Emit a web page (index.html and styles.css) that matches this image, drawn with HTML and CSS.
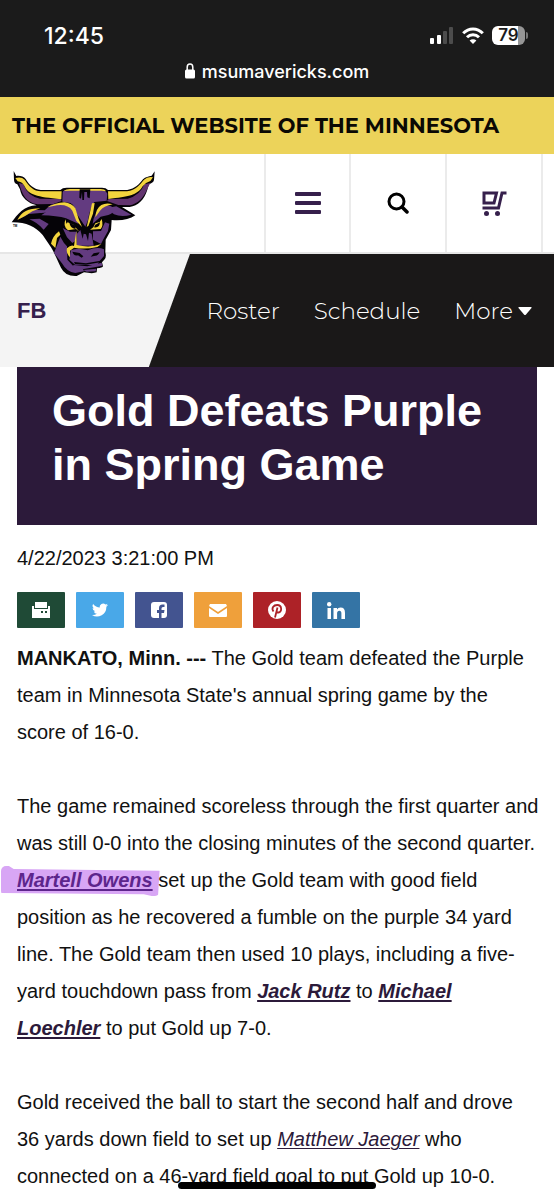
FILE: index.html
```html
<!DOCTYPE html>
<html lang="en">
<head>
    <meta charset="UTF-8">
    <meta name="viewport" content="width=device-width, initial-scale=1.0">
    <title>Gold Defeats Purple in Spring Game</title>
    <link rel="stylesheet" href="styles.css">
</head>
<body>

<!-- Phone status bar and address -->
<div class="browser-bar">
    <div class="status">
        <span class="clock">12:45</span>
        <div class="status-icons">
            <svg width="24" height="18" viewBox="0 0 24 18">
                <rect x="0" y="11" width="4" height="6" rx="1" fill="#fff"/>
                <rect x="7" y="8" width="4" height="9" rx="1" fill="#fff"/>
                <rect x="13" y="4" width="4" height="13" rx="1" fill="#4c4c4c"/>
                <rect x="19" y="0" width="4" height="17" rx="1" fill="#4c4c4c"/>
            </svg>
            <svg width="22" height="18" viewBox="0 0 22 18" fill="none" stroke="#fff" stroke-width="3">
                <path d="M1.2 6.3C6.8.5 15.2.5 20.8 6.3"/>
                <path d="M5 10.2c3.4-3.4 8.600-3.400 12 0"/>
                <path d="M11 17l-3.400-3.600c1.900-1.700 4.900-1.700 6.800 0z" fill="#fff" stroke="none"/>
            </svg>
            <div class="battery"><span>79</span></div>
        </div>
    </div>
    <div class="address">
        <svg width="10" height="16" viewBox="0 0 10 16">
            <path d="M2.200 8V4.200a2.800 3.200 0 0 1 5.600 0V8" fill="none" stroke="#fff" stroke-width="1.500"/>
            <rect x="0" y="6.500" width="10" height="9" rx="1.500" fill="#fff"/>
        </svg>
        <span>msumavericks.com</span>
    </div>
</div>

<div class="banner">THE OFFICIAL WEBSITE OF THE MINNESOTA</div>

<header class="site-header">
    <a class="logo" href="#" aria-label="Minnesota State Mavericks">
        <svg viewBox="30 45 441 321">
            <!-- outline -->
            <path fill="#050307" d="M41 48L49 63C58 61 71 64 77 72C87 89 100 102 122 105L181 105Q187 98 200 98L306 98Q318 98 324 105L382 105C405 101 418 88 429 73C437 65 445 65 455 62L464 49L462 75Q460 84 446 88L442 104C432 136 414 151 389 156L366 156L406 181C388 193 364 198 335 195L333 225L317 254L316 292Q320 305 314 313L306 322L309 334Q308 339 291 340L290 352Q279 357 252 352L230 363Q196 365 183 338C174 321 168 303 153 277L128 240C106 214 76 201 35 202C51 180 72 151 110 151C85 145 64 129 60 103L52 88Q43 86 42 75Z"/>
            <!-- horns -->
            <path fill="#62346f" d="M57 84C66 117 77 143 113 148L160 147L185 138L181 132L120 131Q83 124 70 88Z"/>
            <path fill="#62346f" d="M451 84C436 111 430 141 390 151L355 150L321 138L326 132L383 131Q420 122 433 88Z"/>
            <path fill="#f3d43d" d="M46 69L53 79Q66 81 72 91C87 122 109 125 184 133L185 109L123 109C101 108 88 95 74 74Q64 64 46 69Z"/>
            <path fill="#f3d43d" d="M459 67L451 78Q437 82 428 94C411 122 386 125 325 132L324 109L381 109C407 106 420 88 432 74Q443 64 459 67Z"/>
            <!-- forehead -->
            <path fill="#633b80" d="M188 112Q190 105 202 105L301 105Q318 106 322 116L320 137L283 141Q270 156 264 195L256 215L229 175Q225 151 211 144L187 140Z"/>
            <path fill="#f3d43d" d="M191 108Q198 102 210 102L302 102Q314 102 319 109L304 107L209 107Z"/>
            <path fill="#050307" d="M239 103L271 103L269 130L262 127L261 111L253 111L252 135L247 135L246 111L243 131L238 128Z"/>
            <!-- ears -->
            <path fill="#633b80" d="M59 192C76 167 91 162 111 165L134 166L153 149L199 143C173 158 151 175 121 174L86 177L57 193Z"/>
            <path fill="#f3d43d" d="M52 195C66 170 83 160 121 160L97 169L75 183Z"/>
            <path fill="#633b80" d="M88 193L119 191L146 207L131 224Q110 201 88 193Z"/>
            <path fill="#633b80" d="M341 155L349 154L394 179Q365 187 342 178L318 159Z"/>
            <!-- brow -->
            <path fill="#633b80" d="M124 181Q166 150 195 148Q216 151 225 166L235 206L198 190Q172 182 124 181Z"/>
            <path fill="#633b80" d="M278 206Q281 178 300 160Q320 146 337 156Q346 174 325 180L302 185Z"/>
            <path fill="#f3d43d" d="M142 157Q166 143 193 142Q216 145 226 160L236 192L246 216L229 198L217 167Q203 147 171 151Z"/>
            <path fill="#f3d43d" d="M276 145L284 144L279 176L266 211L260 217L269 176Z"/>
            <path fill="#f3d43d" d="M286 187Q287 161 304 150Q319 142 338 148Q313 152 300 167Z"/>
            <!-- cheek -->
            <path fill="#633b80" d="M162 294L181 245L192 264L201 274L202 314L219 332L248 340L252 349L226 354Q199 349 187 326Z"/>
            <path fill="#f3d43d" d="M153 266Q158 243 177 229L181 239L171 249L166 279Z"/>
            <!-- eyes -->
            <path fill="#f3d43d" d="M197 193Q187 213 204 226L228 222L238 230L220 209L203 202L199 206Z"/>
            <path fill="#050307" d="M208 202L228 214L226 222Q210 220 208 202Z"/>
            <path fill="#f3d43d" d="M305 192Q311 213 302 222L270 224L280 217L286 205L299 201Z"/>
            <path fill="#050307" d="M286 209L300 202Q300 219 282 217Z"/>
            <path fill="#633b80" d="M188 219L210 230L230 230L229 256L217 264L201 247Z"/>
            <path fill="#633b80" d="M315 202L328 206L324 228L310 253L303 267L279 254L279 229L303 228Z"/>
            <!-- muzzle -->
            <path fill="#633b80" d="M231 236L241 225L248 251L251 236L258 238L264 258L267 233L275 236L281 272L229 272Z"/>
            <path fill="#f3d43d" d="M229 227L230 270Q271 280 304 267L292 276Q256 284 222 278L210 287L211 308Q197 295 201 280Q213 268 222 273Z"/>
            <path fill="#633b80" d="M213 286Q232 277 263 286Q292 274 312 283L312 303L299 318L291 331L225 329L208 314Z"/>
            <path fill="#050307" d="M217 290L239 294L250 304L245 308L234 301Q222 304 217 290ZM272 305L281 295L299 292Q295 303 282 303ZM222 321L258 325L302 317L304 321L258 329L225 327Z"/>
            <path fill="#633b80" d="M220 330L262 334L305 323L307 332L283 337L251 342L219 338ZM249 345L289 341L287 349L260 350Z"/>
            <text x="39" y="215" class="tm">TM</text>
        </svg>
    </a>
    <button class="header-btn menu-btn" aria-label="Menu">
        <svg width="26" height="22" viewBox="0 0 26 22" fill="#36204c">
            <rect width="26" height="4" rx="1"/>
            <rect y="9" width="26" height="4" rx="1"/>
            <rect y="18" width="26" height="4" rx="1"/>
        </svg>
    </button>
    <button class="header-btn" aria-label="Search">
        <svg width="22" height="22" viewBox="0 0 22 22" fill="none" stroke="#000" stroke-width="3">
            <circle cx="9.500" cy="9.500" r="7.500"/>
            <path d="M15 15l5 5" stroke-width="3.500" stroke-linecap="round"/>
        </svg>
    </button>
    <button class="header-btn" aria-label="Cart">
        <svg width="25" height="25" viewBox="0 0 25 25" fill="none" stroke="#36204c" stroke-width="3">
            <path d="M2 2h12.500l-2.500 10H2zM24.500 2h-4.500l-3.500 15H.5"/>
            <g fill="#36204c" stroke="none"><circle cx="4.500" cy="22.500" r="2.500"/><circle cx="15.500" cy="22.500" r="2.500"/></g>
        </svg>
    </button>
</header>

<nav class="sport-nav">
    <a class="sport" href="#">FB</a>
    <div class="sport-links">
        <a href="#">Roster</a>
        <a href="#">Schedule</a>
        <a class="more" href="#">More
            <svg width="14" height="8" viewBox="0 0 14 8"><path d="M1 0h12q1 0 .5 1L8 7.500q-1 1-2 0L.5 1Q0 0 1 0z" fill="#fff"/></svg>
        </a>
    </div>
</nav>

<main class="story">
    <h1>Gold Defeats Purple in Spring Game</h1>
    <time class="date" datetime="2023-04-22T15:21">4/22/2023 3:21:00 PM</time>

    <div class="share">
        <button class="print" aria-label="Print">
            <svg width="18" height="18" viewBox="0 0 18 18" fill="#fff"><path d="M3 1h12v6H3z"/><path d="M0 5h2v3h14V5h2v12H0z"/><path d="M9 10h2v2H9zM13 10h2v2h-2z" fill="#1f4a36"/></svg>
        </button>
        <a class="twitter" href="#" aria-label="Twitter">
            <svg width="16" height="16" viewBox="0 0 24 24" fill="#fff"><path d="M24 4.600a10 10 0 0 1-2.800.8 5 5 0 0 0 2.100-2.700 10 10 0 0 1-3.100 1.200 4.900 4.900 0 0 0-8.400 4.500A14 14 0 0 1 1.700 3.100a4.900 4.900 0 0 0 1.500 6.600 5 5 0 0 1-2.200-.6 4.900 4.900 0 0 0 3.900 4.900 5 5 0 0 1-2.200.1 4.900 4.900 0 0 0 4.600 3.400A10 10 0 0 1 0 19.500 14 14 0 0 0 21.500 7.100 10 10 0 0 0 24 4.600z"/></svg>
        </a>
        <a class="facebook" href="#" aria-label="Facebook">
            <svg width="16" height="16" viewBox="0 0 16 16"><rect width="16" height="16" rx="3" fill="#fff"/><path d="M8 16v-5H6V8h2V6q0-3.500 3.500-3.500h2V5H12q-1.500 0-1.500 1.500V8h3l-.5 3h-2.500v5z" fill="#435490"/></svg>
        </a>
        <a class="mail" href="#" aria-label="Email">
            <svg width="18" height="13" viewBox="0 0 18 13" fill="#fff"><path d="M1 0h16l1 2-9 6-9-6z"/><path d="M0 4l9 6 9-6v8q0 1-1 1H1q-1 0-1-1z"/></svg>
        </a>
        <a class="pinterest" href="#" aria-label="Pinterest">
            <svg width="18" height="18" viewBox="0 0 18 18"><circle cx="9" cy="9" r="9" fill="#fff"/><path d="M5.500 10.500C3 7 5.500 4 9.200 4c5.300 0 4.800 7.500 1.300 7.500-1.500 0-2-1-2-1M9.500 6.500L7 16.500" fill="none" stroke="#ad2227" stroke-width="1.800"/></svg>
        </a>
        <a class="linkedin" href="#" aria-label="LinkedIn">
            <svg width="18" height="17" viewBox="0 0 18 17" fill="#fff"><circle cx="2.200" cy="2.200" r="2.200"/><path d="M.5 6H4v11H.5zM6.500 6H10v1.500Q11 5.600 13.500 5.600 18 5.600 18 11v6h-3.600v-5.500q0-2.800-2-2.800-2.300 0-2.300 2.800V17H6.500z"/></svg>
        </a>
    </div>

    <p><b>MANKATO, Minn. ---</b> The Gold team defeated the Purple team in Minnesota State's annual spring game by the score of 16-0.</p>
    <p>The game remained scoreless through the first quarter and was still 0-0 into the closing minutes of the second quarter. <a class="player marked" href="#">Martell Owens</a> set up the Gold team with good field position as he recovered a fumble on the purple 34 yard line. The Gold team then used 10 plays, including a five-yard touchdown pass from <a class="player" href="#">Jack Rutz</a> to <a class="player" href="#">Michael Loechler</a> to put Gold up 7-0.</p>
    <p>Gold received the ball to start the second half and drove 36 yards down field to set up <a class="player light" href="#">Matthew Jaeger</a> who connected on a 46-yard field goal to put Gold up 10-0.</p>
</main>

<div class="home-indicator"></div>

</body>
</html>
```
FILE: styles.css
```css
* {
    box-sizing: border-box;
}

body {
    margin: 0;
    background: #fff;
    color: #111;
    font-family: "Liberation Sans", Arial, sans-serif;
    font-size: 20px;
}

a {
    color: inherit;
    text-decoration: none;
}

button {
    padding: 0;
    border: 0;
    background: none;
    font: inherit;
}

svg {
    display: block;
}

/* Browser bar */
.browser-bar {
    height: 97px;
    padding-top: 19px;
    background: #1b1b1b;
    color: #fff;
    font-family: Inter, sans-serif;
    font-weight: 500;
}

.status {
    display: flex;
    justify-content: space-between;
    align-items: center;
    height: 33px;
    padding: 0 29px 0 44px;
}

.clock {
    font-size: 23px;
}

.status-icons {
    display: flex;
    align-items: center;
    gap: 8px;
}

.battery {
    position: relative;
    width: 33px;
    height: 19px;
    border-radius: 6px;
    background: linear-gradient(90deg, #fff 79%, #969696 79%);
    color: #1b1b1b;
    font-size: 17px;
    font-weight: 600;
    line-height: 19px;
    text-align: center;
}

.battery::after {
    content: "";
    position: absolute;
    top: 6px;
    right: -3px;
    width: 2px;
    height: 7px;
    border-radius: 0 2px 2px 0;
    background: #777;
}

.address {
    display: flex;
    justify-content: center;
    align-items: center;
    gap: 7px;
    height: 38px;
    font-size: 18px;
}

/* Site header */
.banner {
    height: 57px;
    padding-left: 12px;
    overflow: hidden;
    background: #ecd35a;
    color: #0b0904;
    font-family: Montserrat, Inter, sans-serif;
    font-size: 21px;
    font-weight: 700;
    line-height: 57px;
    white-space: nowrap;
}

.site-header {
    position: relative;
    display: flex;
    justify-content: flex-end;
    height: 100px;
    padding-right: 11px;
    border-bottom: 2px solid #e6e6e6;
}

.logo {
    position: absolute;
    top: 16px;
    left: 10px;
    z-index: 1;
    width: 147px;
}

.tm {
    font-size: 9px;
    font-weight: bold;
}

.header-btn {
    display: flex;
    justify-content: center;
    align-items: center;
    width: 96px;
    border-right: 2px solid #ebebeb;
}

.menu-btn {
    width: 87px;
    border-left: 2px solid #ebebeb;
}

.sport-nav {
    display: flex;
    justify-content: space-between;
    align-items: center;
    height: 113px;
    padding: 0 22px 0 17px;
    background: linear-gradient(110deg, #f4f4f4 178px, #1a1818 179px);
}

.sport {
    color: #36204c;
    font-size: 22px;
    font-weight: 700;
}

.sport-links {
    display: flex;
    gap: 34px;
    color: #fff;
    font-family: Montserrat, Inter, sans-serif;
    font-size: 23px;
    font-weight: 300;
}

.more {
    display: flex;
    align-items: center;
    gap: 5px;
}

/* Story */
.story {
    padding: 0 17px;
}

h1 {
    margin: 0;
    padding: 17px 35px 33px;
    background: #2c1a3a;
    color: #fff;
    font-size: 45px;
    line-height: 54px;
}

.date {
    display: block;
    margin-top: 15px;
    line-height: 37px;
}

.share {
    display: flex;
    gap: 11px;
    margin: 15px 0 12px;
}

.share a,
.share button {
    display: flex;
    justify-content: center;
    align-items: center;
    width: 48px;
    height: 36px;
    border-radius: 1px;
}

.print { background: #1f4a36; }
.twitter { background: #49a8e8; }
.facebook { background: #435490; }
.mail { background: #efa03b; }
.pinterest { background: #ad2227; }
.linkedin { background: #3474a5; }

.story p {
    margin: 0 -2px 37px 0;
    line-height: 37px;
}

.story p:last-child {
    margin-bottom: 0;
}

.player {
    color: #2c1a3a;
    font-style: italic;
    font-weight: bold;
    text-decoration: underline;
    text-decoration-thickness: 2px;
    text-underline-offset: 2px;
}

.light {
    font-weight: normal;
    text-decoration-thickness: 1px;
}

/* Marker stroke behind the name */
.marked {
    position: relative;
    color: #5d258c;
}

.marked::before {
    content: "";
    position: absolute;
    inset: -3px -7px -5px -16px;
    z-index: -1;
    border-radius: 5px;
    background: #d8a6f5;
    clip-path: polygon(0 0, 5% 0, 8% 10%, 100% 16%, 99% 100%, 95% 100%, 90% 94%, 0 90%);
}

.home-indicator {
    position: fixed;
    bottom: 11px;
    left: 50%;
    width: 198px;
    height: 7px;
    border-radius: 4px;
    background: #000;
    transform: translateX(-50%);
}
```
